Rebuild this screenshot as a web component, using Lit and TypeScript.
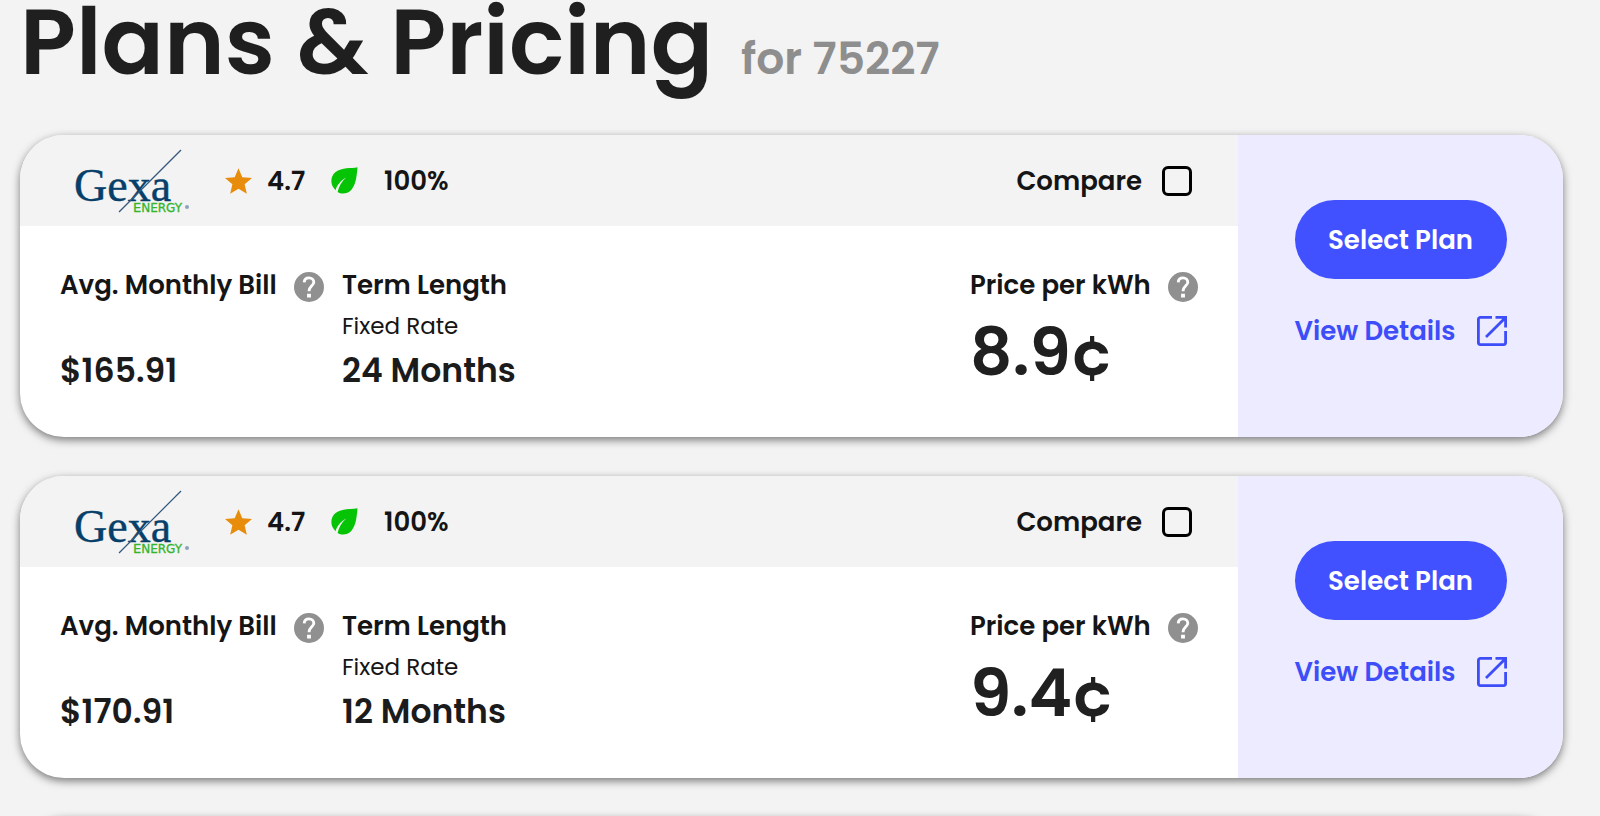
import { LitElement, html, css, svg } from "lit";
import { customElement, property } from "lit/decorators.js";

interface Plan {
  id: string;
  rating: string;
  green: string;
  bill: string;
  rateType: string;
  term: string;
  price: string;
}

const plans: Plan[] = [
  { id: "gexa-24", rating: "4.7", green: "100%", bill: "$165.91", rateType: "Fixed Rate", term: "24 Months", price: "8.9¢" },
  { id: "gexa-12", rating: "4.7", green: "100%", bill: "$170.91", rateType: "Fixed Rate", term: "12 Months", price: "9.4¢" },
];

const helpIcon = svg`<svg viewBox="2 2 20 20" width="30" height="30" aria-hidden="true"><circle cx="12" cy="12" r="10" fill="currentColor"/><path fill="none" stroke="#fff" stroke-width="1.900" d="M8.800 8.900C8.900 6.900 10.200 5.900 12 5.900s3.200 1.100 3.200 2.900c0 2.300-3.200 2.700-3.200 6"/><path fill="#fff" d="M10.700 16.500h2.600v2.500h-2.600z"/></svg>`;

const starIcon = svg`<svg viewBox="2 2 20 19" width="27" height="26" aria-hidden="true"><path fill="#e88c0c" d="M12 17.270L18.180 21l-1.640-7.030L22 9.240l-7.190-.610L12 2 9.190 8.630 2 9.240l5.460 4.730L5.820 21z"/></svg>`;

const leafIcon = svg`<svg viewBox="0 0 27 27" width="27" height="27" aria-hidden="true"><path fill="#05c405" d="M26.500 .3C20 1.600 11 .4 4.600 5C-.2 8.600-1 16 2.600 20.800C3.200 21.800 3.900 22.600 4.600 23.200C5.900 18.400 9.600 13.600 15.200 10.600C10.900 14.500 7.700 19.500 6.600 25C10 27.300 15.600 27 18.600 24.600C25 19.400 25.600 9.600 26.500 .3Z"/></svg>`;

const openIcon = svg`<svg viewBox="0 0 30 30" width="30" height="30" fill="none" stroke="currentColor" stroke-width="2.800" aria-hidden="true"><path d="M15 1.400H3.400a2 2 0 0 0-2 2v23.200a2 2 0 0 0 2 2h23.200a2 2 0 0 0 2-2V15M18.500 1.400h10.100V11.500M28.600 1.400L9 21"/></svg>`;

const logo = svg`<svg viewBox="0 0 116 66" width="116" height="66" role="img" aria-label="Gexa Energy">
  <text x="0" y="53" fill="#063f69" stroke="#063f69" stroke-width=".4" font-family="'Liberation Serif', serif" font-size="46" font-weight="400">Gexa</text>
  <path d="M45 64L107 2" stroke="#33587d" stroke-width="1.200"/>
  <text x="59" y="64" fill="#35b52c" stroke="#35b52c" stroke-width=".3" font-family="'DejaVu Sans', sans-serif" font-size="13" font-weight="400">E<tspan font-size="12">NERGY</tspan></text>
  <circle cx="113" cy="59" r="2" fill="#8ea3bb"/>
</svg>`;

@customElement("plan-card")
export class PlanCard extends LitElement {
  @property({ attribute: false }) plan?: Plan;

  static styles = css`
    :host {
      display: block;
      color: #151515;
      font-size: 26px;
      font-weight: 600;
      line-height: 36px;
    }
    .card {
      display: grid;
      grid-template-columns: minmax(0, 1fr) 325px;
      min-height: 302px;
      border-radius: 44px;
      overflow: hidden;
      background: #fff;
      box-shadow: 0 3px 8px rgba(0, 0, 0, 0.5);
    }
    .main {
      display: flex;
      flex-direction: column;
    }
    .top {
      display: flex;
      align-items: center;
      height: 91px;
      padding: 0 46px 0 54px;
      background: #f3f3f3;
    }
    .rating,
    .green {
      display: flex;
      align-items: center;
    }
    .rating {
      gap: 15px;
      width: 106px;
      margin-left: 35px;
    }
    .green {
      gap: 26px;
    }
    .compare {
      display: flex;
      align-items: center;
      gap: 20px;
      margin-left: auto;
    }
    .box {
      appearance: none;
      width: 30px;
      height: 30px;
      margin: 0;
      border: 3px solid #000;
      border-radius: 6px;
    }
    .box:checked {
      background: #4151ff;
    }
    .details {
      display: grid;
      grid-template-columns: 282px 1fr 228px;
      padding: 41px 40px 0;
    }
    .label {
      display: flex;
      justify-content: space-between;
      align-items: flex-start;
      height: 38px;
      white-space: nowrap;
    }
    .bill .label {
      width: 264px;
    }
    .help {
      display: block;
      padding: 5px 0 0;
      border: 0;
      background: none;
      color: #909090;
      height: 35px;
    }
    .rate {
      height: 42px;
      font-size: 23px;
      font-weight: 400;
      line-height: 42px;
    }
    .value {
      font-size: 33px;
      line-height: 48px;
      color: #1b1b1b;
    }
    .bill .value {
      padding-top: 42px;
    }
    .price .value {
      font-size: 66px;
      line-height: 94px;
      color: #202020;
    }
    .side {
      display: flex;
      flex-direction: column;
      align-items: center;
      padding-top: 65px;
      gap: 34px;
      background: #ecebff;
    }
    .select {
      width: 212px;
      height: 79px;
      border: 0;
      border-radius: 40px;
      background: #4151ff;
      color: #fff;
      font: inherit;
    }
    .view {
      display: flex;
      align-items: center;
      justify-content: space-between;
      width: 212px;
      color: #3d4df8;
      text-decoration: none;
      white-space: nowrap;
    }
  `;

  render() {
    const p = this.plan;
    if (!p) {
      return html`<div class="card" aria-busy="true"><div class="main"><div class="top"></div></div><div class="side"></div></div>`;
    }
    return html`
      <article class="card">
        <div class="main">
          <header class="top">
            ${logo}
            <span class="rating">${starIcon}<span>${p.rating}</span></span>
            <span class="green">${leafIcon}<span>${p.green}</span></span>
            <label class="compare" for=${p.id}>Compare <input class="box" type="checkbox" id=${p.id} /></label>
          </header>
          <div class="details">
            <div class="bill">
              <div class="label">Avg. Monthly Bill <button class="help" aria-label="About the average monthly bill">${helpIcon}</button></div>
              <div class="value">${p.bill}</div>
            </div>
            <div class="term">
              <div class="label">Term Length</div>
              <div class="rate">${p.rateType}</div>
              <div class="value">${p.term}</div>
            </div>
            <div class="price">
              <div class="label">Price per kWh <button class="help" aria-label="About the price per kWh">${helpIcon}</button></div>
              <div class="value">${p.price}</div>
            </div>
          </div>
        </div>
        <div class="side">
          <button class="select">Select Plan</button>
          <a class="view" href="#details">View Details ${openIcon}</a>
        </div>
      </article>
    `;
  }
}

@customElement("app-root")
export class AppRoot extends LitElement {
  static styles = css`
    :host {
      display: block;
      box-sizing: border-box;
      height: 100vh;
      overflow: hidden;
      padding: 0 37px 0 20px;
      background: #f3f3f3;
      font-family: Poppins, Inter, sans-serif;
    }
    .heading {
      display: flex;
      align-items: baseline;
      gap: 28px;
      height: 135px;
      margin: 0;
      color: #1f1f1f;
      font-size: 92px;
      font-weight: 600;
      line-height: 84px;
      white-space: nowrap;
    }
    .zip {
      color: #8e8e8e;
      font-size: 44px;
    }
    .plans {
      display: grid;
      gap: 39px;
    }
  `;

  render() {
    return html`
      <h1 class="heading">Plans &amp; Pricing <span class="zip">for 75227</span></h1>
      <main class="plans">
        ${plans.map((plan) => html`<plan-card .plan=${plan}></plan-card>`)}
        <plan-card></plan-card>
      </main>
    `;
  }
}
